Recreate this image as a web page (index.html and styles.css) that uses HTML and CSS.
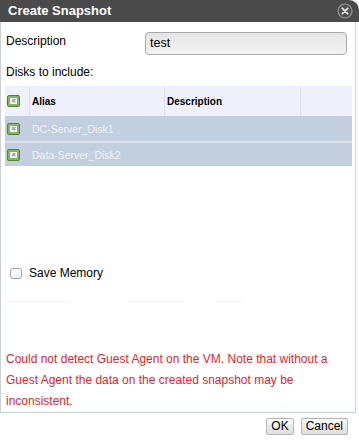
FILE: index.html
```html
<!DOCTYPE html>
<html>
<head>
<meta charset="utf-8">
<link rel="stylesheet" href="styles.css">
</head>
<body>
<div class="dialog">
  <div class="titlebar">
    <span class="title">Create Snapshot</span>
    <span class="close">
      <svg width="16" height="16" viewBox="0 0 16 16">
        <circle cx="8" cy="8" r="7" fill="#505050" stroke="#9a9a9a" stroke-width="1.2"/>
        <path d="M5.3 5.3 L10.7 10.7 M10.7 5.3 L5.3 10.7" stroke="#e6e6e6" stroke-width="1.8" stroke-linecap="round"/>
      </svg>
    </span>
  </div>
  <div class="content">
    <div class="desc-row">
      <span class="label">Description</span>
      <div class="input">test</div>
    </div>
    <div class="disks-label">Disks to include:</div>
    <div class="disks">
      <div class="row head">
        <div class="cell chk"><span class="gcheck"></span></div>
        <div class="cell">Alias</div>
        <div class="cell">Description</div>
        <div class="cell last"></div>
      </div>
      <div class="row item first">
        <div class="cell chk"><span class="gcheck"></span></div>
        <div class="cell">DC-Server_Disk1</div>
        <div class="cell"></div>
        <div class="cell"></div>
      </div>
      <div class="row item">
        <div class="cell chk"><span class="gcheck"></span></div>
        <div class="cell">Data-Server_Disk2</div>
        <div class="cell"></div>
        <div class="cell"></div>
      </div>
    </div>
    <div class="save-mem">
      <span class="box"></span>
      <span class="save-label">Save Memory</span>
    </div>
    <div class="faint">
      <span class="f1"></span><span class="f2"></span><span class="f3"></span>
    </div>
    <div class="warning">Could not detect Guest Agent on the VM. Note that without a Guest Agent the data on the created snapshot may be inconsistent.</div>
  </div>
  <div class="footer">
    <button class="btn">OK</button>
    <button class="btn">Cancel</button>
  </div>
</div>
</body>
</html>
```
FILE: styles.css
```css
html, body {
  margin: 0;
  padding: 0;
  background: #ffffff;
}
body {
  font-family: "Liberation Sans", Arial, sans-serif;
  font-size: 12px;
  color: #000;
}
.dialog {
  width: 359px;
  height: 440px;
  display: flex;
  flex-direction: column;
}
.titlebar {
  height: 22px;
  background: #4a4a4a;
  border-top-right-radius: 10px;
  display: flex;
  align-items: center;
  justify-content: space-between;
  padding: 0 6px 0 8px;
  width: 359px;
  box-sizing: border-box;
}
.title {
  color: #ffffff;
  font-weight: bold;
  font-size: 13px;
  line-height: 16px;
}
.close {
  display: flex;
  width: 16px;
  height: 16px;
}
.content {
  width: 356px;
  box-sizing: border-box;
  height: 391px;
  border: 1px solid #c9d1dc;
  border-top: none;
  padding: 0 3px 0 4px;
  display: flex;
  flex-direction: column;
}
.desc-row {
  display: flex;
  align-items: flex-start;
  margin-top: 10px;
  padding-left: 1px;
}
.label {
  line-height: 14px;
  margin-top: 2px;
}
.input {
  margin-left: auto;
  margin-right: 5px;
  width: 202px;
  height: 23px;
  box-sizing: border-box;
  border: 1px solid #a9a9a9;
  border-radius: 4px;
  background: linear-gradient(#e4e4e4, #f3f3f3);
  padding-left: 4px;
  line-height: 21px;
  font-size: 12.5px;
}
.disks-label {
  margin-top: 10px;
  line-height: 14px;
  padding-left: 1px;
}
.disks {
  margin-top: 7px;
  width: 347px;
}
.row {
  display: grid;
  grid-template-columns: 24px 135px 136px 52px;
}
.row.head {
  height: 30px;
  background: #eef1fb;
  font-weight: bold;
  font-size: 10px;
}
.row.head .cell + .cell {
  border-left: 1px solid #dde1eb;
}
.cell {
  display: flex;
  align-items: center;
  padding-left: 2px;
  box-sizing: border-box;
}
.row.item {
  height: 23px;
  background: #c3cfdf;
  color: #eef2f7;
  font-size: 10.5px;
}
.row.item.first {
  height: 25px;
  border-bottom: 2px solid #dae1eb;
}
.row.item .cell + .cell {
  padding-left: 3px;
}
.gcheck {
  display: block;
  width: 13px;
  height: 12px;
  box-sizing: border-box;
  border: 1px solid #55803a;
  border-radius: 2px;
  background: #86b466;
  position: relative;
}
.gcheck::after {
  content: "\00d7";
  position: absolute;
  left: 2px;
  top: 2px;
  width: 7px;
  height: 6px;
  background: #f4f6f2;
  color: #7a8a70;
  font-size: 8px;
  line-height: 6px;
  text-align: center;
  font-weight: bold;
}
.save-mem {
  margin-top: 100px;
  display: flex;
  align-items: center;
  height: 14px;
  padding-left: 5px;
}
.box {
  width: 12px;
  height: 11px;
  box-sizing: border-box;
  border: 1px solid #a4a4a4;
  border-radius: 3px;
  background: linear-gradient(#ffffff, #efefef);
}
.save-label {
  margin-left: 7px;
  line-height: 14px;
}
.faint {
  margin-top: 21px;
  height: 1px;
  display: flex;
}
.faint span {
  height: 1px;
  background: #f1f3f6;
}
.f1 { width: 66px; }
.f2 { width: 57px; margin-left: 57px; }
.f3 { width: 28px; margin-left: 30px; }
.warning {
  margin-top: 47px;
  color: #e2232d;
  line-height: 21px;
  padding-left: 1px;
}
.footer {
  display: flex;
  justify-content: flex-end;
  gap: 7px;
  padding: 5px 11px 0 0;
}
.btn {
  font-family: "Liberation Sans", Arial, sans-serif;
  font-size: 12px;
  height: 17px;
  line-height: 15px;
  padding: 0 4px;
  margin: 0;
  border: 1px solid #b5b5b5;
  border-radius: 2px;
  background: linear-gradient(#f9f9f9, #dedede);
  color: #000;
}
```
